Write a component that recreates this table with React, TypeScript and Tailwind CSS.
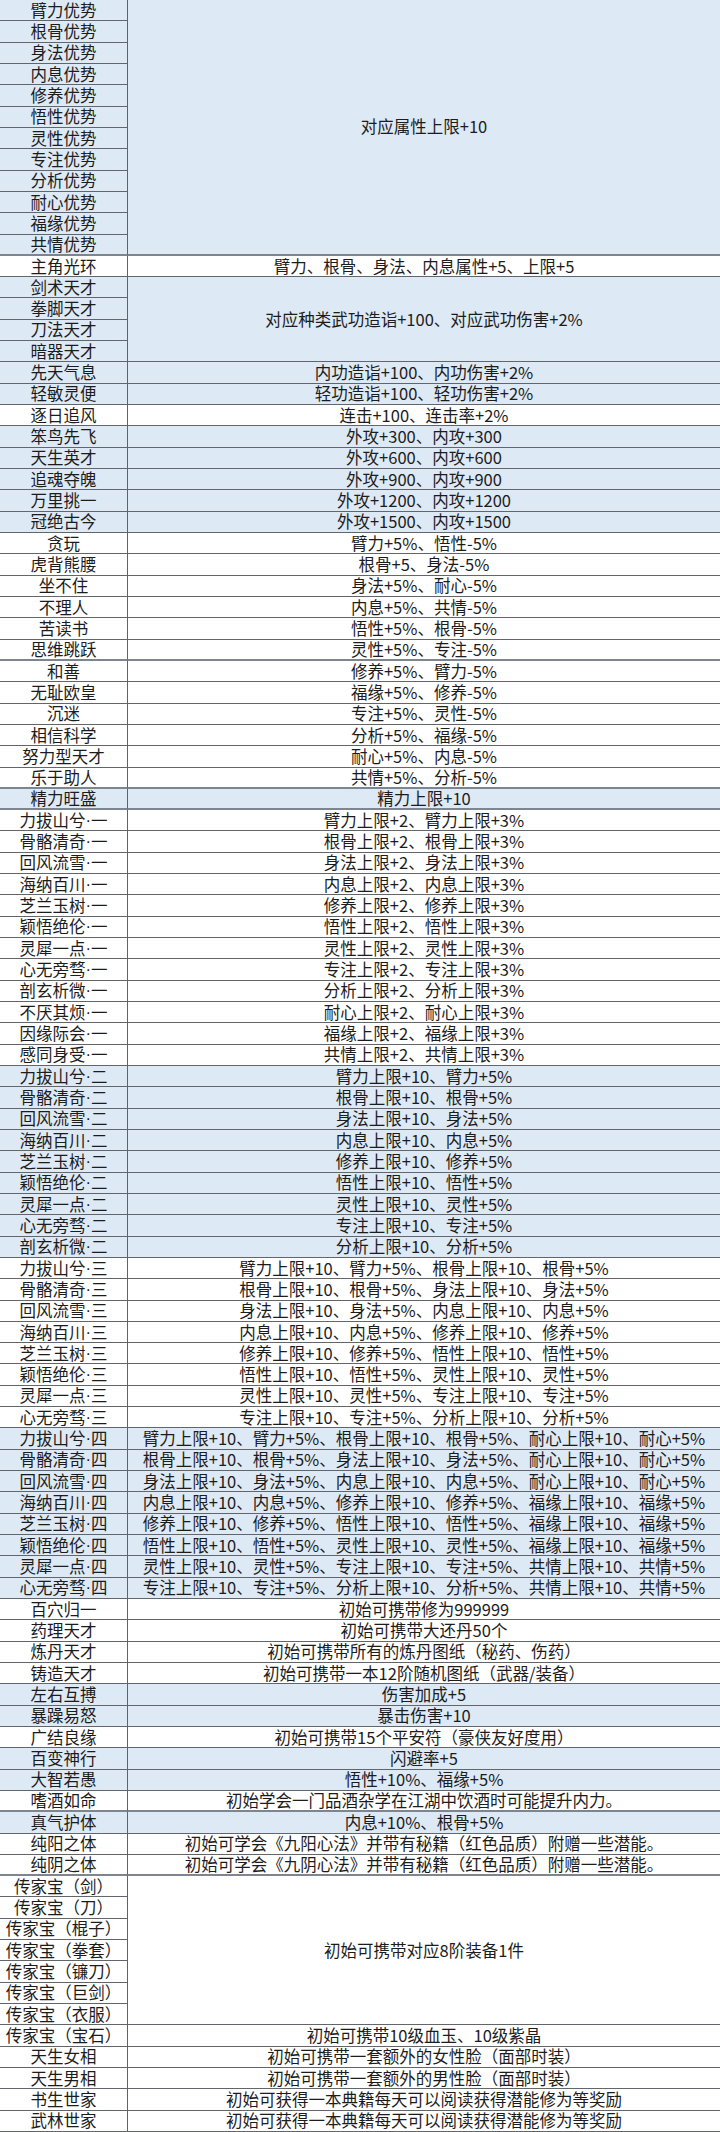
import React from 'react';

// 天赋效果对照表
type Group = {
  labels: string[];
  text: string;
  blue?: boolean;
  thick?: boolean;
};

const groups: Group[] = [
  {
    labels: [
      '臂力优势', '根骨优势', '身法优势', '内息优势', '修养优势', '悟性优势',
      '灵性优势', '专注优势', '分析优势', '耐心优势', '福缘优势', '共情优势',
    ],
    text: '对应属性上限+10',
    blue: true,
    thick: true,
  },
  { labels: ['主角光环'], text: '臂力、根骨、身法、内息属性+5、上限+5' },
  {
    labels: ['剑术天才', '拳脚天才', '刀法天才', '暗器天才'],
    text: '对应种类武功造诣+100、对应武功伤害+2%',
    blue: true,
  },
  { labels: ['先天气息'], text: '内功造诣+100、内功伤害+2%', blue: true },
  { labels: ['轻敏灵便'], text: '轻功造诣+100、轻功伤害+2%', blue: true },
  { labels: ['逐日追风'], text: '连击+100、连击率+2%' },
  { labels: ['笨鸟先飞'], text: '外攻+300、内攻+300', blue: true },
  { labels: ['天生英才'], text: '外攻+600、内攻+600', blue: true },
  { labels: ['追魂夺魄'], text: '外攻+900、内攻+900', blue: true },
  { labels: ['万里挑一'], text: '外攻+1200、内攻+1200', blue: true },
  { labels: ['冠绝古今'], text: '外攻+1500、内攻+1500', blue: true },
  { labels: ['贪玩'], text: '臂力+5%、悟性-5%' },
  { labels: ['虎背熊腰'], text: '根骨+5、身法-5%' },
  { labels: ['坐不住'], text: '身法+5%、耐心-5%' },
  { labels: ['不理人'], text: '内息+5%、共情-5%' },
  { labels: ['苦读书'], text: '悟性+5%、根骨-5%' },
  { labels: ['思维跳跃'], text: '灵性+5%、专注-5%', thick: true },
  { labels: ['和善'], text: '修养+5%、臂力-5%' },
  { labels: ['无耻欧皇'], text: '福缘+5%、修养-5%' },
  { labels: ['沉迷'], text: '专注+5%、灵性-5%' },
  { labels: ['相信科学'], text: '分析+5%、福缘-5%' },
  { labels: ['努力型天才'], text: '耐心+5%、内息-5%' },
  { labels: ['乐于助人'], text: '共情+5%、分析-5%', thick: true },
  { labels: ['精力旺盛'], text: '精力上限+10', blue: true, thick: true },
  { labels: ['力拔山兮·一'], text: '臂力上限+2、臂力上限+3%' },
  { labels: ['骨骼清奇·一'], text: '根骨上限+2、根骨上限+3%' },
  { labels: ['回风流雪·一'], text: '身法上限+2、身法上限+3%' },
  { labels: ['海纳百川·一'], text: '内息上限+2、内息上限+3%' },
  { labels: ['芝兰玉树·一'], text: '修养上限+2、修养上限+3%' },
  { labels: ['颖悟绝伦·一'], text: '悟性上限+2、悟性上限+3%' },
  { labels: ['灵犀一点·一'], text: '灵性上限+2、灵性上限+3%' },
  { labels: ['心无旁骛·一'], text: '专注上限+2、专注上限+3%' },
  { labels: ['剖玄析微·一'], text: '分析上限+2、分析上限+3%' },
  { labels: ['不厌其烦·一'], text: '耐心上限+2、耐心上限+3%' },
  { labels: ['因缘际会·一'], text: '福缘上限+2、福缘上限+3%' },
  { labels: ['感同身受·一'], text: '共情上限+2、共情上限+3%' },
  { labels: ['力拔山兮·二'], text: '臂力上限+10、臂力+5%', blue: true },
  { labels: ['骨骼清奇·二'], text: '根骨上限+10、根骨+5%', blue: true },
  { labels: ['回风流雪·二'], text: '身法上限+10、身法+5%', blue: true },
  { labels: ['海纳百川·二'], text: '内息上限+10、内息+5%', blue: true },
  { labels: ['芝兰玉树·二'], text: '修养上限+10、修养+5%', blue: true },
  { labels: ['颖悟绝伦·二'], text: '悟性上限+10、悟性+5%', blue: true },
  { labels: ['灵犀一点·二'], text: '灵性上限+10、灵性+5%', blue: true },
  { labels: ['心无旁骛·二'], text: '专注上限+10、专注+5%', blue: true },
  { labels: ['剖玄析微·二'], text: '分析上限+10、分析+5%', blue: true },
  { labels: ['力拔山兮·三'], text: '臂力上限+10、臂力+5%、根骨上限+10、根骨+5%' },
  { labels: ['骨骼清奇·三'], text: '根骨上限+10、根骨+5%、身法上限+10、身法+5%' },
  { labels: ['回风流雪·三'], text: '身法上限+10、身法+5%、内息上限+10、内息+5%' },
  { labels: ['海纳百川·三'], text: '内息上限+10、内息+5%、修养上限+10、修养+5%' },
  { labels: ['芝兰玉树·三'], text: '修养上限+10、修养+5%、悟性上限+10、悟性+5%' },
  { labels: ['颖悟绝伦·三'], text: '悟性上限+10、悟性+5%、灵性上限+10、灵性+5%' },
  { labels: ['灵犀一点·三'], text: '灵性上限+10、灵性+5%、专注上限+10、专注+5%' },
  { labels: ['心无旁骛·三'], text: '专注上限+10、专注+5%、分析上限+10、分析+5%' },
  { labels: ['力拔山兮·四'], text: '臂力上限+10、臂力+5%、根骨上限+10、根骨+5%、耐心上限+10、耐心+5%', blue: true },
  { labels: ['骨骼清奇·四'], text: '根骨上限+10、根骨+5%、身法上限+10、身法+5%、耐心上限+10、耐心+5%', blue: true },
  { labels: ['回风流雪·四'], text: '身法上限+10、身法+5%、内息上限+10、内息+5%、耐心上限+10、耐心+5%', blue: true },
  { labels: ['海纳百川·四'], text: '内息上限+10、内息+5%、修养上限+10、修养+5%、福缘上限+10、福缘+5%', blue: true },
  { labels: ['芝兰玉树·四'], text: '修养上限+10、修养+5%、悟性上限+10、悟性+5%、福缘上限+10、福缘+5%', blue: true },
  { labels: ['颖悟绝伦·四'], text: '悟性上限+10、悟性+5%、灵性上限+10、灵性+5%、福缘上限+10、福缘+5%', blue: true },
  { labels: ['灵犀一点·四'], text: '灵性上限+10、灵性+5%、专注上限+10、专注+5%、共情上限+10、共情+5%', blue: true },
  { labels: ['心无旁骛·四'], text: '专注上限+10、专注+5%、分析上限+10、分析+5%、共情上限+10、共情+5%', blue: true },
  { labels: ['百穴归一'], text: '初始可携带修为999999' },
  { labels: ['药理天才'], text: '初始可携带大还丹50个' },
  { labels: ['炼丹天才'], text: '初始可携带所有的炼丹图纸（秘药、伤药）' },
  { labels: ['铸造天才'], text: '初始可携带一本12阶随机图纸（武器/装备）' },
  { labels: ['左右互搏'], text: '伤害加成+5', blue: true },
  { labels: ['暴躁易怒'], text: '暴击伤害+10', blue: true },
  { labels: ['广结良缘'], text: '初始可携带15个平安符（豪侠友好度用）' },
  { labels: ['百变神行'], text: '闪避率+5', blue: true },
  { labels: ['大智若愚'], text: '悟性+10%、福缘+5%', blue: true },
  { labels: ['嗜酒如命'], text: '初始学会一门品酒杂学在江湖中饮酒时可能提升内力。', thick: true },
  { labels: ['真气护体'], text: '内息+10%、根骨+5%', blue: true },
  { labels: ['纯阳之体'], text: '初始可学会《九阳心法》并带有秘籍（红色品质）附赠一些潜能。' },
  { labels: ['纯阴之体'], text: '初始可学会《九阴心法》并带有秘籍（红色品质）附赠一些潜能。', thick: true },
  {
    labels: [
      '传家宝（剑）', '传家宝（刀）', '传家宝（棍子）', '传家宝（拳套）',
      '传家宝（镰刀）', '传家宝（巨剑）', '传家宝（衣服）',
    ],
    text: '初始可携带对应8阶装备1件',
  },
  { labels: ['传家宝（宝石）'], text: '初始可携带10级血玉、10级紫晶' },
  { labels: ['天生女相'], text: '初始可携带一套额外的女性脸（面部时装）' },
  { labels: ['天生男相'], text: '初始可携带一套额外的男性脸（面部时装）' },
  { labels: ['书生世家'], text: '初始可获得一本典籍每天可以阅读获得潜能修为等奖励' },
  { labels: ['武林世家'], text: '初始可获得一本典籍每天可以阅读获得潜能修为等奖励' },
];

const spanClass: Record<number, string> = {
  1: 'row-span-1',
  4: 'row-span-4',
  7: 'row-span-7',
  12: 'row-span-12',
};

const LINE = 'border-b border-b-[#62666b]';

// the CJK font draws "·" full width, so the dot gets a latin font
function Label({ text }: { text: string }) {
  const parts = text.split('·');
  if (parts.length < 2) return <>{text}</>;
  return (
    <>
      {parts[0]}
      <span className="font-['Liberation_Sans',sans-serif]">·</span>
      {parts[1]}
    </>
  );
}

function Cell({
  children,
  className,
}: {
  children: React.ReactNode;
  className: string;
}) {
  return (
    <div
      className={`flex min-h-0 items-center justify-center whitespace-nowrap leading-[1.15] ${className}`}
    >
      {children}
    </div>
  );
}

export default function App() {
  const cells: React.ReactNode[] = [];

  groups.forEach((g, gi) => {
    const bg = g.blue ? 'bg-[#dde9f5]' : 'bg-white';
    const bottom = g.thick ? 'border-b-2 border-b-[#7d8590]' : LINE;

    g.labels.forEach((label, li) => {
      const last = li === g.labels.length - 1;
      cells.push(
        <Cell
          key={`l-${gi}-${li}`}
          className={`col-start-1 border-r border-r-[#5f6266] ${bg} ${last ? bottom : LINE}`}
        >
          <Label text={label} />
        </Cell>
      );
      if (li === 0) {
        cells.push(
          <Cell
            key={`r-${gi}`}
            className={`col-start-2 ${spanClass[g.labels.length]} ${bg} ${bottom}`}
          >
            {g.text}
          </Cell>
        );
      }
    });
  });

  return (
    <div className="h-[2132px] w-[720px] bg-white font-['Noto_Sans_CJK_SC','Noto_Sans',sans-serif] text-[16.5px] text-[#1c1c1c]">
      <div className="grid h-full grid-cols-[128px_1fr] grid-rows-[repeat(100,minmax(0,1fr))]">
        {cells}
      </div>
    </div>
  );
}
